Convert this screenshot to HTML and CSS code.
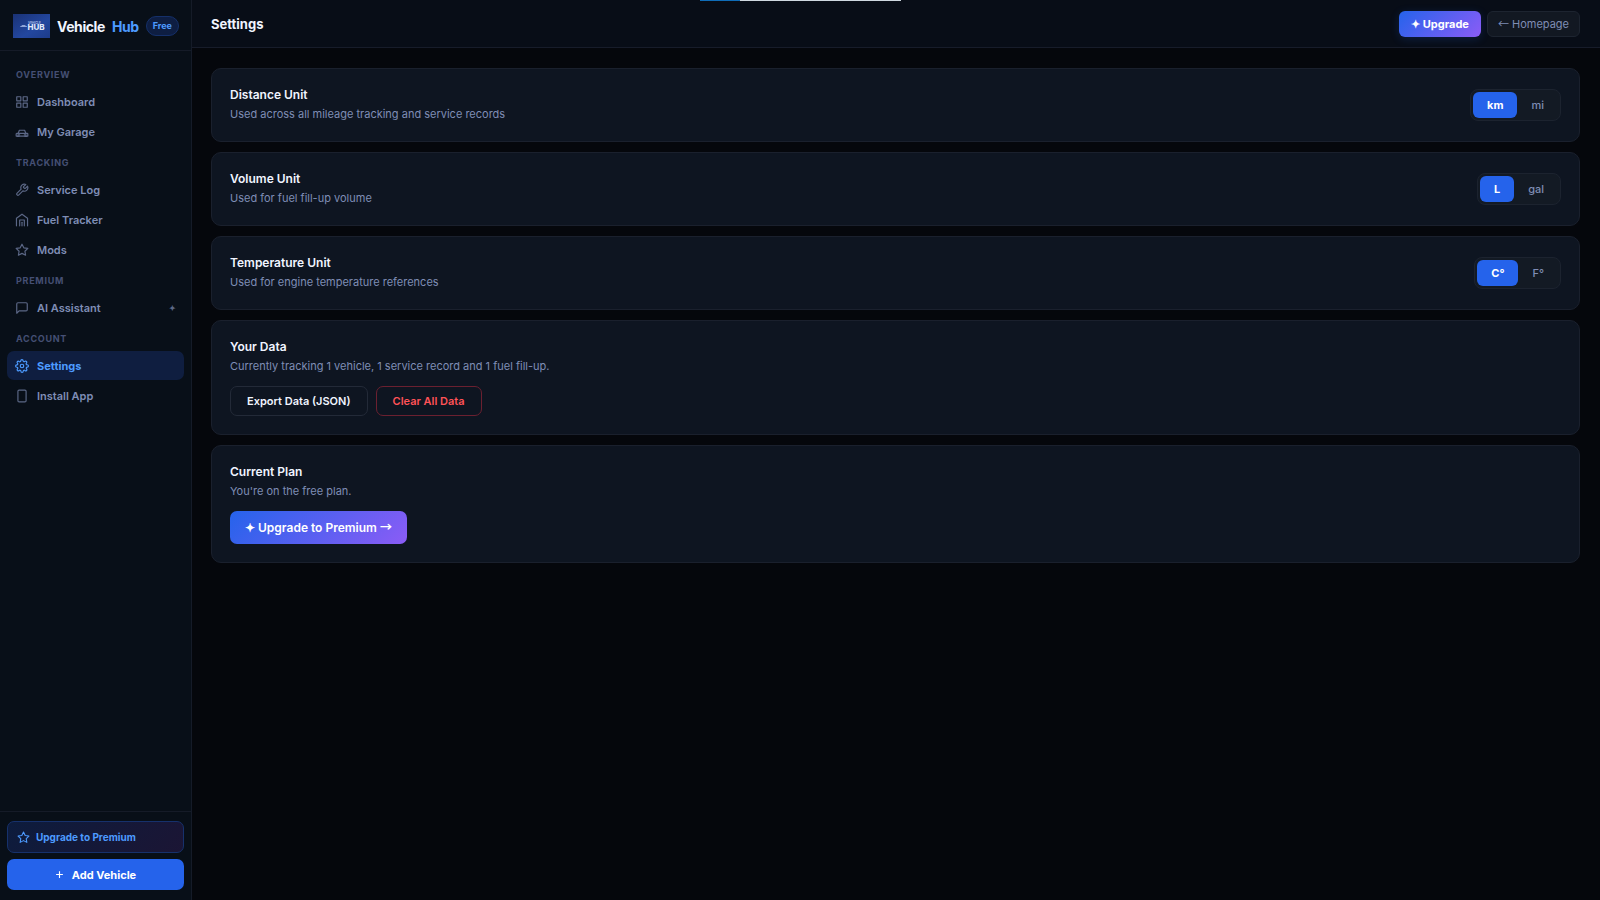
FILE: index.html
```html
<!DOCTYPE html>
<html lang="en">
<head>
  <meta charset="UTF-8" />
  <meta name="viewport" content="width=device-width, initial-scale=1.0"/>
  <title>Vehicle Hub - Settings</title>
  <link rel="stylesheet" href="styles.css">
</head>
<body>
  <div class="load-bar"><span class="load-done"></span></div>

  <aside class="sidebar">
    <div class="brand">
      <svg class="brand-logo" viewBox="0 0 37 24" aria-hidden="true">
        <defs>
          <linearGradient id="logoBg" x1="0" y1="0" x2="1" y2="1">
            <stop offset="0" stop-color="#1a3275"/>
            <stop offset="0.6" stop-color="#23479f"/>
            <stop offset="1" stop-color="#1d3c8a"/>
          </linearGradient>
        </defs>
        <rect width="37" height="24" fill="url(#logoBg)"/>
        <path d="M7 12.500l1.200-.5 1-.9h2.600l1.200.9 1 .3v.7H7z" fill="#8fa5d8"/>
        <text class="logo-top" x="15" y="10">VEHICLE</text>
        <text class="logo-hub" x="14.500" y="16">HUB</text>
      </svg>
      <span class="brand-name">Vehicle <span class="accent">Hub</span></span>
      <span class="plan-badge">Free</span>
    </div>

    <nav class="nav">
      <div class="nav-label">Overview</div>
      <a class="nav-item" href="#dashboard">
        <svg class="icon" viewBox="0 0 24 24"><rect x="3" y="3" width="7" height="7"/><rect x="14" y="3" width="7" height="7"/><rect x="3" y="14" width="7" height="7"/><rect x="14" y="14" width="7" height="7"/></svg>
        Dashboard
      </a>
      <a class="nav-item" href="#garage">
        <svg class="icon" viewBox="0 0 24 24"><path d="M5.500 14l2-5h9l2 5"/><path d="M3 14.500h18a1 1 0 0 1 1 1V19H2v-3.500a1 1 0 0 1 1-1z"/><path d="M4 19.500h3M17 19.500h3M5 17h3M16 17h3"/></svg>
        My Garage
      </a>

      <div class="nav-label">Tracking</div>
      <a class="nav-item" href="#service">
        <svg class="icon" viewBox="0 0 24 24"><path d="M14.700 6.300a1 1 0 0 0 0 1.400l1.600 1.600a1 1 0 0 0 1.400 0l3.770-3.770a6 6 0 0 1-7.940 7.940l-6.910 6.910a2.120 2.120 0 0 1-3-3l6.910-6.910a6 6 0 0 1 7.940-7.940l-3.760 3.760z"/></svg>
        Service Log
      </a>
      <a class="nav-item" href="#fuel">
        <svg class="icon" viewBox="0 0 24 24"><path d="M2.500 22V9L12 2l9.500 7v13"/><path d="M8 22V12h8v10"/><path d="M12 16v6"/></svg>
        Fuel Tracker
      </a>
      <a class="nav-item" href="#mods">
        <svg class="icon" viewBox="0 0 24 24"><polygon points="12 2 15.090 8.260 22 9.270 17 14.140 18.180 21.020 12 17.770 5.820 21.020 7 14.140 2 9.270 8.910 8.260 12 2"/></svg>
        Mods
      </a>

      <div class="nav-label">Premium</div>
      <a class="nav-item" href="#assistant">
        <svg class="icon" viewBox="0 0 24 24"><path d="M21 15a2 2 0 0 1-2 2H7l-4 4V5a2 2 0 0 1 2-2h14a2 2 0 0 1 2 2z"/></svg>
        AI Assistant
        <span class="nav-spark">✦</span>
      </a>

      <div class="nav-label">Account</div>
      <a class="nav-item active" href="#settings" aria-current="page">
        <svg class="icon" viewBox="0 0 24 24"><circle cx="12" cy="12" r="3"/><path d="M19.400 15a1.650 1.650 0 0 0 .33 1.820l.06.06a2 2 0 1 1-2.830 2.830l-.06-.06a1.650 1.650 0 0 0-2.800 1.170V21a2 2 0 0 1-4 0v-.09a1.650 1.650 0 0 0-2.900-1.170l-.06.06a2 2 0 1 1-2.830-2.830l.06-.06a1.650 1.650 0 0 0-1.170-2.800H3a2 2 0 0 1 0-4h.09a1.650 1.650 0 0 0 1.170-2.900l-.06-.06a2 2 0 1 1 2.830-2.830l.06.06a1.650 1.650 0 0 0 2.800-1.170V3a2 2 0 0 1 4 0v.09a1.650 1.650 0 0 0 2.800 1.170l.06-.06a2 2 0 1 1 2.830 2.830l-.06.06a1.650 1.650 0 0 0 1.170 2.800H21a2 2 0 0 1 0 4h-.09a1.650 1.650 0 0 0-1.510 1z"/></svg>
        Settings
      </a>
      <a class="nav-item" href="#install">
        <svg class="icon" viewBox="0 0 24 24"><rect x="5" y="2" width="14" height="20" rx="2"/></svg>
        Install App
      </a>
    </nav>

    <div class="sidebar-footer">
      <button class="side-upgrade">
        <svg class="icon" viewBox="0 0 24 24"><polygon points="12 2 15.090 8.260 22 9.270 17 14.140 18.180 21.020 12 17.770 5.820 21.020 7 14.140 2 9.270 8.910 8.260 12 2"/></svg>
        Upgrade to Premium
      </button>
      <button class="side-add">
        <svg class="plus" viewBox="0 0 24 24"><path d="M12 3v18M3 12h18"/></svg>
        Add Vehicle
      </button>
    </div>
  </aside>

  <div class="main">
    <header class="topbar">
      <h1>Settings</h1>
      <div class="topbar-actions">
        <button class="btn-upgrade">✦ Upgrade</button>
        <a class="btn-home" href="#home"><span class="arrow">←</span> Homepage</a>
      </div>
    </header>

    <main class="content">
      <section class="card card-row">
        <div>
          <h2>Distance Unit</h2>
          <p>Used across all mileage tracking and service records</p>
        </div>
        <div class="toggle">
          <button class="on" onclick="pick(this)">km</button>
          <button onclick="pick(this)">mi</button>
        </div>
      </section>

      <section class="card card-row">
        <div>
          <h2>Volume Unit</h2>
          <p>Used for fuel fill-up volume</p>
        </div>
        <div class="toggle">
          <button class="on" onclick="pick(this)">L</button>
          <button onclick="pick(this)">gal</button>
        </div>
      </section>

      <section class="card card-row">
        <div>
          <h2>Temperature Unit</h2>
          <p>Used for engine temperature references</p>
        </div>
        <div class="toggle">
          <button class="on" onclick="pick(this)">C°</button>
          <button onclick="pick(this)">F°</button>
        </div>
      </section>

      <section class="card">
        <h2>Your Data</h2>
        <p>Currently tracking 1 vehicle, 1 service record and 1 fuel fill-up.</p>
        <div class="card-actions">
          <button class="btn">Export Data (JSON)</button>
          <button class="btn btn-danger">Clear All Data</button>
        </div>
      </section>

      <section class="card">
        <h2>Current Plan</h2>
        <p>You're on the free plan.</p>
        <div class="card-actions">
          <button class="btn-premium">✦ Upgrade to Premium <span class="arrow">→</span></button>
        </div>
      </section>
    </main>
  </div>

  <script>
    function pick(btn) {
      btn.parentElement.querySelectorAll("button").forEach(b => b.classList.remove("on"));
      btn.classList.add("on");
    }
  </script>
</body>
</html>
```

FILE: styles.css
```css
:root {
  --bg: #05070c;
  --side: #080f18;
  --panel: #0e1521;
  --line: #1a202d;
  --text: #f0f4ff;
  --muted: #7f8db5;
  --dim: #454f74;
  --blue: #2563eb;
  --sky: #4d9bff;
  --violet: #8b5cf6;
}
* {
  box-sizing: border-box;
}
body {
  margin: 0;
  min-height: 100vh;
  display: flex;
  font-family: Inter, "Liberation Sans", sans-serif;
  font-size: 11px;
  background: var(--bg);
  color: var(--text);
}
h1, h2, p {
  margin: 0;
}
a {
  text-decoration: none;
}
button {
  font-family: inherit;
  cursor: pointer;
  border: none;
}

/* thin progress strip along the top edge */
.load-bar {
  position: absolute;
  top: 0;
  left: 700px;
  width: 201px;
  height: 1px;
  background: #cfd8e0;
}
.load-done {
  display: block;
  width: 20%;
  height: 1px;
  background: #0f6cb8;
}

.sidebar {
  width: 192px;
  flex-shrink: 0;
  display: flex;
  flex-direction: column;
  background: var(--side);
  border-right: 1px solid #151b28;
}
.brand {
  display: flex;
  align-items: center;
  gap: 7px;
  height: 51px;
  padding: 2px 13px 0;
  border-bottom: 1px solid #151b28;
}
.brand-logo {
  width: 37px;
  height: 24px;
  flex-shrink: 0;
}
.logo-top {
  font-size: 3px;
  font-weight: 700;
  fill: #a9bbe6;
}
.logo-hub {
  font-size: 8px;
  font-weight: 800;
  fill: #dfe7fa;
}
.brand-name {
  display: flex;
  gap: 7px;
  font-size: 14px;
  font-weight: 700;
  letter-spacing: -0.03em;
}
.accent {
  color: var(--sky);
}
.plan-badge {
  padding: 0 6px;
  font-size: 9px;
  font-weight: 700;
  line-height: 18px;
  color: var(--sky);
  background: #0e1e42;
  border: 1px solid #15306a;
  border-radius: 10px;
}

.nav {
  flex: 1;
  padding: 8px 7px;
}
.nav-label {
  padding: 9px 9px 6px;
  font-size: 9px;
  font-weight: 700;
  line-height: 13px;
  letter-spacing: 0.08em;
  text-transform: uppercase;
  color: var(--dim);
}
.nav-item {
  display: flex;
  align-items: center;
  gap: 8px;
  height: 29px;
  margin-bottom: 1px;
  padding: 0 8px;
  font-weight: 600;
  color: var(--muted);
  border-radius: 7px;
}
.nav-item.active {
  font-weight: 700;
  color: var(--sky);
  background: #0f1e40;
}
.icon {
  width: 14px;
  height: 14px;
  flex-shrink: 0;
  fill: none;
  stroke: currentColor;
  stroke-width: 2;
  stroke-linejoin: round;
  stroke-linecap: round;
}
.nav-item .icon {
  opacity: 0.7;
}
.nav-item.active .icon {
  opacity: 1;
}
.nav-spark {
  margin-left: auto;
  font-size: 8px;
  opacity: 0.7;
}

.sidebar-footer {
  display: flex;
  flex-direction: column;
  gap: 6px;
  padding: 9px 7px 10px;
  border-top: 1px solid #151b28;
}
.side-upgrade {
  display: flex;
  align-items: center;
  gap: 6px;
  height: 32px;
  padding: 0 9px;
  font-size: 10px;
  font-weight: 700;
  color: var(--sky);
  background: linear-gradient(135deg, #0d1c3d, #1b1534);
  border: 1px solid #16316c;
  border-radius: 7px;
}
.side-upgrade .icon {
  width: 13px;
  height: 13px;
}
.side-add {
  display: flex;
  align-items: center;
  justify-content: center;
  gap: 8px;
  height: 31px;
  font-size: 11px;
  font-weight: 700;
  color: #fff;
  background: var(--blue);
  border-radius: 7px;
}
.plus {
  width: 9px;
  height: 9px;
  fill: none;
  stroke: currentColor;
  stroke-width: 3;
}

.main {
  flex: 1;
  min-width: 0;
}
.topbar {
  display: flex;
  align-items: center;
  justify-content: space-between;
  height: 48px;
  padding: 0 20px 0 19px;
  background: #080d17;
  border-bottom: 1px solid #171c2a;
}
.topbar h1 {
  font-size: 13px;
  font-weight: 700;
}
.topbar-actions {
  display: flex;
  gap: 6px;
}
.btn-upgrade, .btn-home {
  height: 26px;
  font-size: 11px;
  border-radius: 6px;
}
.btn-upgrade {
  padding: 0 12px;
  font-weight: 700;
  color: #fff;
  background: linear-gradient(135deg, var(--blue), var(--violet));
  box-shadow: 0 2px 10px rgba(37, 99, 235, 0.2);
}
.btn-home {
  padding: 0 10px;
  line-height: 24px;
  color: var(--muted);
  background: #121822;
  border: 1px solid #1d2430;
}
.arrow {
  font-family: "Noto Sans CJK JP", sans-serif;
  line-height: 1;
}

.content {
  display: flex;
  flex-direction: column;
  gap: 10px;
  padding: 20px 20px 20px 19px;
}
.card {
  padding: 18px;
  background: var(--panel);
  border: 1px solid var(--line);
  border-radius: 10px;
}
.card-row {
  display: flex;
  align-items: center;
  justify-content: space-between;
}
.card h2 {
  font-size: 12px;
  font-weight: 600;
  line-height: 16px;
}
.card p {
  margin-top: 3px;
  font-size: 11px;
  line-height: 17px;
  color: var(--muted);
}
.toggle {
  display: flex;
  padding: 2px;
  background: #131a24;
  border: 1px solid #1c232f;
  border-radius: 8px;
}
.toggle button {
  padding: 0 14px;
  font-size: 11px;
  font-weight: 500;
  line-height: 26px;
  color: var(--muted);
  background: none;
  border-radius: 6px;
}
.toggle .on {
  font-weight: 700;
  color: #fff;
  background: var(--blue);
}
.card-actions {
  display: flex;
  gap: 8px;
  margin-top: 11px;
}
.btn {
  height: 30px;
  padding: 0 16px;
  font-size: 11px;
  font-weight: 600;
  color: var(--text);
  background: none;
  border: 1px solid #232a38;
  border-radius: 7px;
}
.btn-danger {
  color: #ff5257;
  border-color: #6b2030;
}
.btn-premium {
  height: 33px;
  padding: 0 15px;
  font-size: 12px;
  font-weight: 600;
  color: #fff;
  background: linear-gradient(135deg, var(--blue), var(--violet));
  border-radius: 7px;
}
```
